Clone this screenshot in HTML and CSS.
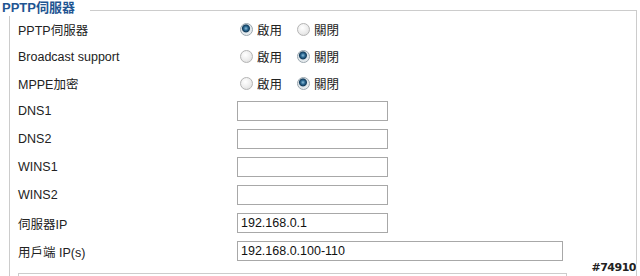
FILE: index.html
```html
<!DOCTYPE HTML>
<html>
<head>
<meta charset="utf-8">
<link rel="stylesheet" href="styles.css">
</head>
<body>
  <div class="group">
    <div class="legend">PPTP伺服器</div>
    <div class="row short">
      <span class="label">PPTP伺服器</span>
      <div class="ctrl">
        <label><input type="radio" name="pptp" checked>啟用</label>
        <label><input type="radio" name="pptp">關閉</label>
      </div>
    </div>
    <div class="row short">
      <span class="label">Broadcast support</span>
      <div class="ctrl">
        <label><input type="radio" name="bcast">啟用</label>
        <label><input type="radio" name="bcast" checked>關閉</label>
      </div>
    </div>
    <div class="row short">
      <span class="label">MPPE加密</span>
      <div class="ctrl">
        <label><input type="radio" name="mppe">啟用</label>
        <label><input type="radio" name="mppe" checked>關閉</label>
      </div>
    </div>
    <div class="row">
      <span class="label">DNS1</span>
      <div class="ctrl"><input class="txt" type="text"></div>
    </div>
    <div class="row">
      <span class="label">DNS2</span>
      <div class="ctrl"><input class="txt" type="text"></div>
    </div>
    <div class="row">
      <span class="label">WINS1</span>
      <div class="ctrl"><input class="txt" type="text"></div>
    </div>
    <div class="row">
      <span class="label">WINS2</span>
      <div class="ctrl"><input class="txt" type="text"></div>
    </div>
    <div class="row">
      <span class="label">伺服器IP</span>
      <div class="ctrl"><input class="txt" type="text" value="192.168.0.1"></div>
    </div>
    <div class="row">
      <span class="label">用戶端 IP(s)</span>
      <div class="ctrl"><input class="txt wide" type="text" value="192.168.0.100-110"></div>
    </div>
    <div class="subgroup"></div>
  </div>
  <div class="mark">#74910</div>
</body>
</html>
```

FILE: styles.css
```css
*{
    padding: 0px;
    margin: 0px;
    box-sizing: border-box;
}
html, body{
    overflow: hidden;
    background: #fff;
}
body{
    font-family: "Liberation Sans", "Noto Sans CJK TC", sans-serif;
    font-size: 12.5px;
    color: #222;
    position: relative;
    height: 276px;
}
.group{
    margin: 10px 3px 0 9px;
    border: 1px solid #cccccc;
    border-bottom: none;
    padding: 0 0 0 8px;
    height: 266px;
}
.legend{
    margin: -11px 0 0 -16px;
    width: 88px;
    height: 16px;
    line-height: 16px;
    background: #fff;
    color: #1f5592;
    font-weight: bold;
    font-size: 13px;
}
.row{
    display: grid;
    grid-template-columns: 219px 1fr;
    align-items: center;
    height: 28px;
}
.row.short{
    height: 27px;
}
.ctrl{
    display: flex;
    align-items: center;
}
.ctrl label{
    display: flex;
    align-items: center;
    margin-right: 12px;
}
.ctrl input[type=radio]{
    -webkit-appearance: none;
    appearance: none;
    width: 13px;
    height: 13px;
    border-radius: 50%;
    border: 1px solid #b4b4b4;
    background: radial-gradient(circle at 40% 35%, #ffffff 0%, #ececec 55%, #d6d6d6 100%);
    margin: 0 4px 0 3px;
}
.ctrl input[type=radio]:checked{
    border-color: #9aa6ae;
    background: radial-gradient(circle at 45% 40%, #8fc0dc 0px, #2d6a93 2px, #123c5c 3.5px, #dfe6ea 4.5px, #f4f4f4 100%);
}
.txt{
    width: 151px;
    height: 20px;
    border: 1px solid #a8a8a8;
    font-family: "Liberation Sans", sans-serif;
    font-size: 12.5px;
    color: #111;
    padding: 0 3px;
    outline: none;
}
.txt.wide{
    width: 326px;
}
.subgroup{
    margin-top: 8px;
    width: 549px;
    height: 3px;
    border: 1px solid #cccccc;
    border-bottom: none;
}
.mark{
    position: absolute;
    right: 4px;
    top: 261px;
    font-family: "DejaVu Sans", sans-serif;
    font-weight: bold;
    font-size: 11px;
    color: #222;
    text-shadow: 1px 0 #fff, -1px 0 #fff, 0 1px #fff, 0 -1px #fff;
    letter-spacing: -0.5px;
}
```
